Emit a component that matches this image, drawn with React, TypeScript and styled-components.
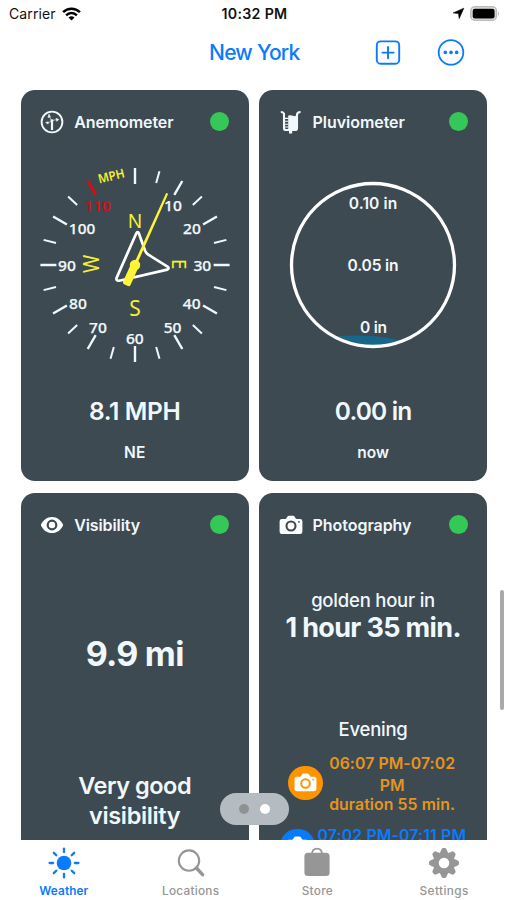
import React from "react";
import styled, { createGlobalStyle } from "styled-components";

const BLUE = "#0a7bff";
const GREY = "#969696";
const PALE = "#f0f8fc";
const RED = "#d60d12";

const GlobalStyle = createGlobalStyle`
  * { box-sizing: border-box; }
  body {
    margin: 0;
    background: #fff;
    font-family: Inter, "Liberation Sans", sans-serif;
    overflow: hidden;
  }
  svg { display: block; flex: none; overflow: visible; }
`;

const Screen = styled.div`
  position: relative;
  width: 507px;
  height: 900px;
  display: flex;
  flex-direction: column;
  overflow: hidden;
  background: #fff;
`;

const Label = styled.span<{ $size: number; $weight?: number; $spacing?: number; $line?: number; $color?: string }>`
  font-size: ${(p) => p.$size}px;
  font-weight: ${(p) => p.$weight ?? 400};
  letter-spacing: ${(p) => p.$spacing ?? 0}px;
  line-height: ${(p) => p.$line ?? 20}px;
  color: ${(p) => p.$color ?? "inherit"};
  white-space: nowrap;
`;

const StatusBar = styled.header`
  height: 28px;
  padding: 0 7px 0 9px;
  display: grid;
  grid-template-columns: 1fr auto 1fr;
  align-items: center;
  color: #111;
`;

const StatusSide = styled.div<{ $end?: boolean }>`
  display: flex;
  align-items: center;
  gap: 6px;
  padding-bottom: 1px;
  justify-content: ${(p) => (p.$end ? "flex-end" : "flex-start")};
`;

const NavBar = styled.nav`
  height: 62px;
  flex: none;
  padding: 0 42px 13px 0;
  display: grid;
  grid-template-columns: 209px 1fr auto auto;
  align-items: center;
  color: ${BLUE};
`;

const NavTitle = styled.h1`
  grid-column: 2;
  margin: 0;
  display: flex;
  font-weight: 400;
`;

const NavButton = styled.button<{ $gap?: number }>`
  padding: 0;
  border: 0;
  background: none;
  color: inherit;
  margin-right: ${(p) => p.$gap ?? 0}px;
`;

const Board = styled.main`
  height: 750px;
  flex: none;
  padding: 0.4px 0 0 20.7px;
  display: grid;
  grid-template-columns: 228px 228px;
  grid-template-rows: 390.4px 390px;
  gap: 12.4px 10.4px;
  overflow: hidden;
`;

const Card = styled.section`
  border-radius: 14px;
  background: #3d4a52;
  color: ${PALE};
  display: flex;
  flex-direction: column;
  align-items: center;
  overflow: hidden;
`;

const CardHead = styled.div`
  width: 100%;
  height: 63px;
  padding: 0 19.5px;
  display: flex;
  align-items: center;
  gap: 10px;
`;

const Status = styled.i`
  width: 19px;
  height: 19px;
  margin-left: auto;
  border-radius: 50%;
  background: #36c759;
`;

const Graphic = styled.div`
  height: 242.4px;
`;

const Lines = styled.div<{ $top: number }>`
  margin-top: ${(p) => p.$top}px;
  display: flex;
  flex-direction: column;
  align-items: center;
`;

const ShootRow = styled.div<{ $top: number; $gap: number; $color: string; $inset?: number }>`
  margin-top: ${(p) => p.$top}px;
  padding-right: ${(p) => p.$inset ?? 0}px;
  display: flex;
  align-items: center;
  gap: ${(p) => p.$gap}px;
  color: ${(p) => p.$color};
`;

const ShootBadge = styled.div<{ $color: string }>`
  width: 34.6px;
  height: 34.6px;
  border-radius: 50%;
  display: grid;
  place-items: center;
  background: ${(p) => p.$color};
  color: #fff;
`;

const TabBar = styled.footer`
  height: 60px;
  flex: none;
  display: flex;
  background: #fff;
`;

const Tab = styled.div<{ $active?: boolean }>`
  flex: 1;
  padding: 7px 0 0 1px;
  display: flex;
  flex-direction: column;
  align-items: center;
  gap: 3px;
  color: ${(p) => (p.$active ? BLUE : GREY)};
`;

const Pager = styled.div`
  position: absolute;
  left: 219.5px;
  top: 793px;
  width: 69px;
  height: 32px;
  border-radius: 16px;
  padding: 0 19px;
  display: flex;
  align-items: center;
  justify-content: space-between;
  background: #b4bcc1;
`;

const PageDot = styled.i<{ $on?: boolean }>`
  width: 10px;
  height: 10px;
  border-radius: 50%;
  background: ${(p) => (p.$on ? "#fff" : "#8e9293")};
`;

const ScrollThumb = styled.div`
  position: absolute;
  left: 499.5px;
  top: 589.5px;
  width: 4px;
  height: 120px;
  border-radius: 2px;
  background: #a9a9a9;
`;

const Wifi = () => (
  <svg width="19" height="14" viewBox="0 0 19 14" fill="none" stroke="#000" strokeWidth="2.5">
    <path d="M1.1 5.2 A12 12 0 0 1 17.9 5.2" />
    <path d="M4.1 8.3 A7.7 7.7 0 0 1 14.9 8.3" />
    <path d="M9.5 13.6 L6.5 10.6 A4.3 4.3 0 0 1 12.5 10.6 Z" fill="#000" stroke="none" />
  </svg>
);

const LocationArrow = () => (
  <svg width="11" height="11" viewBox="0 0 11 11">
    <path d="M10.8 .2 L6.2 10.6 L5.5 5.5 L.2 4.9 Z" fill="#000" stroke="#000" strokeWidth=".6" strokeLinejoin="round" />
  </svg>
);

const Battery = () => (
  <svg width="30" height="15" viewBox="0 0 30 15">
    <rect x=".8" y=".8" width="25.6" height="13.4" rx="4" fill="#e4e4e1" stroke="#bcbcb8" strokeWidth="1.6" />
    <rect x="2.7" y="2.7" width="21.9" height="9.7" rx="2.2" fill="#000" />
    <path d="M28 5 Q30 7.5 28 10Z" fill="#bcbcb8" />
  </svg>
);

const PlusBox = () => (
  <svg width="26" height="26" viewBox="0 0 26 26" fill="none" stroke="currentColor" strokeWidth="1.9">
    <rect x="1.8" y="1.4" width="22.4" height="22.4" rx="3.8" />
    <path d="M13 7V18.2M7.4 12.6H18.6" strokeLinecap="round" />
  </svg>
);

const MoreCircle = () => (
  <svg width="28" height="28" viewBox="0 0 28 28" fill="none" stroke="currentColor" strokeWidth="1.8">
    <circle cx="14" cy="13.4" r="12.3" />
    <g fill="currentColor" stroke="none">
      <circle cx="8.3" cy="13.4" r="1.8" />
      <circle cx="14" cy="13.4" r="1.8" />
      <circle cx="19.7" cy="13.4" r="1.8" />
    </g>
  </svg>
);

const AnemometerIcon = () => (
  <svg width="24" height="24" viewBox="0 0 24 24" fill="none" stroke={PALE}>
    <circle cx="12" cy="12" r="10.4" strokeWidth="1.9" />
    <path d="M12 10.6V20" strokeWidth="2.2" />
    <path d="M11.2 10.2L9.5 6.6M12.8 10.3L17 9.6M11 11.4L7.6 13" strokeWidth=".6" />
    <circle cx="12" cy="10.6" r="1.4" fill={PALE} stroke="none" />
    <path d="M7.9 7.4L9 3.9L10.4 7ZM16 8.3L18.8 9.4L16.8 11.4ZM5.6 12.6L8.2 11.7L8.2 14.1Z" fill={PALE} strokeWidth=".5" />
  </svg>
);

const PluviometerIcon = () => (
  <svg width="24" height="24" viewBox="0 0 24 24" fill="none" stroke={PALE}>
    <path d="M1.8 2Q4.3 2 5 3.6V18.2Q5 20 7 20H16Q18 20 18 18.2V5Q18 2.1 21.6 2" strokeWidth="2.1" />
    <path d="M9.2 5.6Q12 4.8 14 5.8T18 5V20H9.2Z" fill={PALE} stroke="none" />
    <path d="M6 8.4H9.6M6 11.3H9.6M6 14.2H9.6M6 17H9.6" strokeWidth="1.1" />
    <path d="M11.6 20V23.6" strokeWidth="3.2" />
  </svg>
);

const EyeIcon = () => (
  <svg width="24" height="24" viewBox="0 0 24 24">
    <path
      fill="#fff"
      fillRule="evenodd"
      d="M12 3.9C7 3.9 2.8 7.1.8 12 2.8 16.9 7 20.1 12 20.1S21.2 16.9 23.2 12C21.2 7.1 17 3.9 12 3.9ZM12 17.4A5.4 5.4 0 1 1 12 6.6 5.4 5.4 0 0 1 12 17.4ZM12 8.8A3.2 3.2 0 1 0 12 15.2 3.2 3.2 0 0 0 12 8.8Z"
    />
  </svg>
);

const CameraIcon = ({ size = 24, hole = "#3d4a52" }: { size?: number; hole?: string }) => (
  <svg width={size} height={size} viewBox="0 0 24 24">
    <path
      fill="#fff"
      d="M3 6H6.2Q6.9 6 7.4 5.2L8.5 3.4Q9 2.7 10 2.7H14Q15 2.7 15.5 3.4L16.6 5.2Q17.1 6 17.8 6H21Q23.4 6 23.4 8.2V18.8Q23.4 21 21 21H3Q.6 21 .6 18.8V8.2Q.6 6 3 6Z"
    />
    <circle cx="12" cy="13" r="4.5" fill="none" stroke={hole} strokeWidth="2.1" />
    <circle cx="20" cy="8.9" r=".9" fill={hole} />
  </svg>
);

const RAYS = [0, 45, 90, 135, 180, 225, 270, 315];

const SunIcon = () => (
  <svg width="32" height="32" viewBox="-16 -16 32 32">
    <circle r="7.3" fill="currentColor" />
    {RAYS.map((a) => (
      <path key={a} d="M0 -10.9V-14.4" stroke="currentColor" strokeWidth="2.3" strokeLinecap="round" transform={`rotate(${a})`} />
    ))}
  </svg>
);

const SearchIcon = () => (
  <svg width="32" height="32" viewBox="-16 -16 32 32" fill="none" stroke="currentColor">
    <circle cx="-2" cy="-2.4" r="10.2" strokeWidth="2.1" />
    <path d="M5.4 5L11.6 11.7" strokeWidth="3.4" strokeLinecap="round" />
  </svg>
);

const BagIcon = () => (
  <svg width="32" height="32" viewBox="-16 -16 32 32">
    <rect x="-12.6" y="-10.3" width="25.2" height="23.4" rx="3.6" fill="currentColor" />
    <path d="M-5 -9Q-4.8 -14.4 0 -14.4T5 -9" fill="none" stroke="currentColor" strokeWidth="1.7" />
  </svg>
);

const GearIcon = () => (
  <svg width="32" height="32" viewBox="-16 -16 32 32">
    <circle r="8.1" fill="none" stroke="currentColor" strokeWidth="5.6" />
    {RAYS.map((a) => (
      <path
        key={a}
        d="M-4.4 -9.2L-2.7 -13.2Q-2.3 -14.9 -1 -14.9H1Q2.3 -14.9 2.7 -13.2L4.4 -9.2Z"
        fill="currentColor"
        transform={`rotate(${a})`}
      />
    ))}
  </svg>
);

const DIAL_FONT = '"Noto Sans", "Open Sans", sans-serif';

const DialNumber = styled.text<{ $red?: boolean }>`
  font: 500 15.2px ${DIAL_FONT};
  fill: ${(p) => (p.$red ? RED : PALE)};
  stroke: ${(p) => (p.$red ? RED : PALE)};
  stroke-width: 0.25px;
  text-anchor: middle;
`;

const DialLetter = styled.text<{ $size: number; $weight?: number }>`
  font: ${(p) => p.$weight ?? 400} ${(p) => p.$size}px ${DIAL_FONT};
  fill: #f4f032;
  text-anchor: middle;
`;

const GaugeText = styled.text`
  font: 600 15.6px Inter, sans-serif;
  fill: ${PALE};
  text-anchor: middle;
`;

/* Dial numbers with their centres, measured from the pivot. */
const NUMBERS: [string, number, number][] = [
  ["10", 38, -59.3],
  ["20", 57, -36.7],
  ["30", 67.3, 0.3],
  ["40", 56.7, 39],
  ["50", 37.6, 62.3],
  ["60", -0.2, 73.7],
  ["70", -37, 62.3],
  ["80", -57, 38.7],
  ["90", -68, 0.3],
  ["100", -53, -36.3],
  ["110", -37.4, -59.3],
];

const TICKS = Array.from({ length: 24 }, (_, i) => i * 15).filter((a) => a !== 345);

const WindDial = () => (
  <svg width="228" height="242" viewBox="-114 -112 228 242">
    {TICKS.map((a) => {
      const major = a % 30 === 0;
      const s = Math.sin((a * Math.PI) / 180);
      const c = -Math.cos((a * Math.PI) / 180);
      return (
        <line
          key={a}
          x1={s * (major ? 78.6 : 81.8)}
          y1={c * (major ? 81 : 84.8)}
          x2={s * 94.6}
          y2={c * 97}
          stroke={a === 330 ? RED : PALE}
          strokeWidth={a === 330 ? 3 : major ? 2.4 : 2}
        />
      );
    })}
    {NUMBERS.map(([n, x, y]) => (
      <DialNumber key={n} x={x} y={y + 5.4} $red={n === "110"} textLength={n.length === 3 ? 26.3 : 17.8} lengthAdjust="spacingAndGlyphs">
        {n}
      </DialNumber>
    ))}
    <DialLetter $size={12.5} $weight={600} transform="translate(-23.8 -89) rotate(-14)" y="4.4" textLength="27" lengthAdjust="spacingAndGlyphs">
      MPH
    </DialLetter>
    <DialLetter $size={20} y="-37" textLength="14.5" lengthAdjust="spacingAndGlyphs">N</DialLetter>
    <DialLetter $size={22} y="51.2" textLength="11.5" lengthAdjust="spacingAndGlyphs">S</DialLetter>
    <DialLetter $size={20.5} transform="translate(37.2 -.8) rotate(90)" textLength="10.5" lengthAdjust="spacingAndGlyphs">E</DialLetter>
    <DialLetter $size={21.5} transform="translate(-35.6 -1) rotate(-90)" textLength="18.2" lengthAdjust="spacingAndGlyphs">W</DialLetter>
    <path
      d="M1.2 -31.5Q2.6 -34.2 4 -31.3L10.2 -14Q11.3 -11.6 13.3 -10.3L32.5 1.6Q34.8 3.4 32.3 4.6L-15.8 15.7Q-19.3 16 -18.4 12.9Z"
      fill="none"
      stroke="#fff"
      strokeWidth="2.7"
      strokeLinejoin="round"
    />
    <g fill="#fdf535" transform="rotate(24.2)">
      <path d="M-1.5 0L-1.1 -78.5H1.1L1.5 0Z" />
      <circle r="5.2" />
      <rect x="-4.1" y="0" width="8.2" height="22" rx="2" />
    </g>
  </svg>
);

const RainGauge = () => (
  <svg width="228" height="242" viewBox="-114 -112 228 242">
    <path d="M-36 71Q-22 69.8 -2 71T28 76.5Q0 87 -36 71Z" fill="#17668c" />
    <circle r="81.5" fill="none" stroke="#fff" strokeWidth="3.3" />
    <GaugeText y="-56" textLength="48.5">0.10 in</GaugeText>
    <GaugeText y="5.8" textLength="51">0.05 in</GaugeText>
    <GaugeText x=".6" y="67.5" textLength="27">0 in</GaugeText>
  </svg>
);

interface CardProps {
  title: string;
  spacing: number;
  icon: React.ReactNode;
  children: React.ReactNode;
}

const WeatherCard = ({ title, spacing, icon, children }: CardProps) => (
  <Card>
    <CardHead>
      {icon}
      <Label $size={16} $weight={600} $spacing={spacing}>{title}</Label>
      <Status />
    </CardHead>
    {children}
  </Card>
);

export default function App() {
  return (
    <Screen>
      <GlobalStyle />
      <StatusBar>
        <StatusSide>
          <Label $size={14} $spacing={0.1}>Carrier</Label>
          <Wifi />
        </StatusSide>
        <Label $size={14.2} $weight={600} $spacing={0.3}>10:32 PM</Label>
        <StatusSide $end>
          <LocationArrow />
          <Battery />
        </StatusSide>
      </StatusBar>
      <NavBar>
        <NavTitle>
          <Label $size={21} $spacing={-0.75} $weight={450} $line={26}>New York</Label>
        </NavTitle>
        <NavButton $gap={36} aria-label="Add"><PlusBox /></NavButton>
        <NavButton aria-label="More"><MoreCircle /></NavButton>
      </NavBar>
      <Board>
        <WeatherCard title="Anemometer" spacing={-0.1} icon={<AnemometerIcon />}>
          <Graphic><WindDial /></Graphic>
          <Lines $top={0.5}>
            <Label $size={24.5} $weight={600} $spacing={-0.4} $line={30}>8.1 MPH</Label>
          </Lines>
          <Lines $top={16.7}>
            <Label $size={15.5} $weight={600}>NE</Label>
          </Lines>
        </WeatherCard>
        <WeatherCard title="Pluviometer" spacing={-0.05} icon={<PluviometerIcon />}>
          <Graphic><RainGauge /></Graphic>
          <Lines $top={0.5}>
            <Label $size={24.5} $weight={600} $spacing={-0.85} $line={30}>0.00 in</Label>
          </Lines>
          <Lines $top={16.7}>
            <Label $size={15.5} $weight={600}>now</Label>
          </Lines>
        </WeatherCard>
        <WeatherCard title="Visibility" spacing={-0.1} icon={<EyeIcon />}>
          <Lines $top={78}>
            <Label $size={34} $weight={700} $spacing={-0.75} $line={40}>9.9 mi</Label>
          </Lines>
          <Lines $top={96.5}>
            <Label $size={23.5} $weight={600} $spacing={-0.45} $line={30}>Very good</Label>
            <Label $size={23.5} $weight={600} $spacing={-0.35} $line={30}>visibility</Label>
          </Lines>
        </WeatherCard>
        <WeatherCard title="Photography" spacing={-0.05} icon={<CameraIcon />}>
          <Lines $top={32}>
            <Label $size={18.5} $weight={500} $spacing={-0.22} $line={25}>golden hour in</Label>
            <Label $size={27} $weight={700} $spacing={-0.65} $line={30}>1 hour 35 min.</Label>
          </Lines>
          <Lines $top={74}>
            <Label $size={18.5} $weight={500} $spacing={-0.25} $line={25}>Evening</Label>
          </Lines>
          <ShootRow $top={10.5} $gap={6.3} $inset={2.8} $color="#e5951d">
            <ShootBadge $color="#fe9500"><CameraIcon size={23} hole="#fe9500" /></ShootBadge>
            <Lines $top={0}>
              <Label $size={15.8} $weight={600} $spacing={0.08} $line={22}>06:07 PM-07:02</Label>
              <Label $size={15.8} $weight={600} $line={22}>PM</Label>
              <Label $size={15.8} $weight={600} $spacing={0.08} $line={16.5}>duration 55 min.</Label>
            </Lines>
          </ShootRow>
          <ShootRow $top={15.5} $gap={3} $color={BLUE}>
            <ShootBadge $color="#077bff"><CameraIcon size={23} hole="#077bff" /></ShootBadge>
            <Lines $top={-19}>
              <Label $size={15.8} $weight={600} $spacing={0.16} $line={22}>07:02 PM-07:11 PM</Label>
            </Lines>
          </ShootRow>
        </WeatherCard>
      </Board>
      <TabBar>
        <Tab $active>
          <SunIcon />
          <Label $size={11.8} $weight={600} $spacing={0.1} $line={18}>Weather</Label>
        </Tab>
        <Tab>
          <SearchIcon />
          <Label $size={11.8} $weight={500} $spacing={0.25} $line={18}>Locations</Label>
        </Tab>
        <Tab>
          <BagIcon />
          <Label $size={11.8} $weight={500} $spacing={0.3} $line={18}>Store</Label>
        </Tab>
        <Tab>
          <GearIcon />
          <Label $size={11.8} $weight={500} $spacing={0.4} $line={18}>Settings</Label>
        </Tab>
      </TabBar>
      <Pager>
        <PageDot />
        <PageDot $on />
      </Pager>
      <ScrollThumb />
    </Screen>
  );
}
